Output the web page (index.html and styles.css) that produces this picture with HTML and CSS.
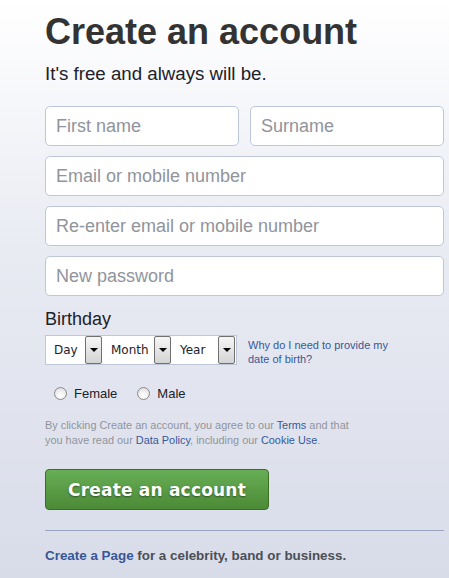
FILE: index.html
```html
<!DOCTYPE html>
<html>
<head>
<meta charset="utf-8">
<link rel="stylesheet" href="styles.css">
</head>
<body>
<div class="page">
  <h1 class="title">Create an account</h1>
  <p class="subtitle">It's free and always will be.</p>
  <div class="row two">
    <div class="field">First name</div>
    <div class="field">Surname</div>
  </div>
  <div class="row"><div class="field">Email or mobile number</div></div>
  <div class="row"><div class="field">Re-enter email or mobile number</div></div>
  <div class="row"><div class="field">New password</div></div>
  <div class="bday-label">Birthday</div>
  <div class="bday">
    <div class="selects">
      <div class="sel sel-day"><span class="sel-text">Day</span><span class="arrow"></span></div>
      <div class="sel sel-month"><span class="sel-text">Month</span><span class="arrow"></span></div>
      <div class="sel sel-year"><span class="sel-text">Year</span><span class="arrow"></span></div>
    </div>
    <span class="why">Why do I need to provide my date of birth?</span>
  </div>
  <div class="gender">
    <span class="radio-item"><span class="radio"></span>Female</span>
    <span class="radio-item"><span class="radio"></span>Male</span>
  </div>
  <div class="terms">
    <div class="terms-line">By clicking Create an account, you agree to our <span class="link">Terms</span> and that</div>
    <div class="terms-line">you have read our <span class="link">Data Policy</span>, including our <span class="link">Cookie Use</span>.</div>
  </div>
  <button class="submit">Create an account</button>
  <div class="divider"></div>
  <p class="footer"><span class="link">Create a Page</span> for a celebrity, band or business.</p>
</div>
</body>
</html>
```
FILE: styles.css
```css
html, body {
  margin: 0;
  padding: 0;
}
body {
  width: 449px;
  height: 578px;
  overflow: hidden;
  background: linear-gradient(#ffffff 0px, #e9ebf3 250px, #d8dce9 578px);
  font-family: "Liberation Sans", Arial, sans-serif;
}
.page {
  padding: 10px 5px 0 45px;
}
.title {
  margin: 0;
  font-size: 36px;
  font-weight: bold;
  color: #333333;
  line-height: 44px;
}
.subtitle {
  margin: 8px 0 0;
  font-size: 18.7px;
  line-height: 24px;
  color: #1d2129;
}
.row {
  display: flex;
  gap: 11px;
  margin-top: 10px;
}
.row.two {
  margin-top: 20px;
}
.field {
  flex: 1;
  height: 38px;
  border: 1px solid #bdc7d8;
  border-radius: 5px;
  background: #fff;
  box-sizing: content-box;
  padding: 0 10px;
  font-size: 18px;
  line-height: 38px;
  color: #90949c;
}
.bday-label {
  margin-top: 12px;
  font-size: 18px;
  line-height: 22px;
  color: #1d2129;
}
.bday {
  display: flex;
  align-items: flex-start;
  margin-top: 5px;
}
.selects {
  display: flex;
  border: 1px solid #bdc7d8;
  background: #fff;
}
.sel {
  display: flex;
  align-items: center;
  height: 28px;
  font-family: Tahoma, "DejaVu Sans", sans-serif;
  font-size: 12px;
  color: #1d2129;
}
.sel-text {
  flex: 1;
  padding-left: 8px;
}
.sel-day { width: 57px; }
.sel-month { width: 69px; }
.sel-year { width: 64px; }
.arrow {
  position: relative;
  width: 15px;
  height: 26px;
  margin-right: 1px;
  border: 1px solid #707070;
  border-radius: 2px;
  background: linear-gradient(#f6f6f6, #d4d4d4);
}
.arrow::after {
  content: "";
  position: absolute;
  left: 4px;
  top: 11px;
  border-left: 4px solid transparent;
  border-right: 4px solid transparent;
  border-top: 4px solid #000;
}
.why {
  margin: 3px 0 0 11px;
  width: 148px;
  font-size: 11px;
  line-height: 14px;
  color: #365899;
}
.gender {
  display: flex;
  gap: 20px;
  margin: 20px 0 0 9px;
  font-size: 13px;
  color: #1d2129;
}
.radio-item {
  display: flex;
  align-items: center;
  gap: 7px;
}
.radio {
  width: 11px;
  height: 11px;
  border: 1px solid #8a8a8a;
  border-radius: 50%;
  background: radial-gradient(circle at 50% 70%, #ffffff 10%, #dcdcdc 90%);
}
.terms {
  margin: 17px 0 0;
  font-size: 10.9px;
  line-height: 15px;
  color: #90949c;
}
.terms-line {
  white-space: nowrap;
}
.link {
  color: #365899;
}
.submit {
  display: block;
  margin-top: 21px;
  width: 224px;
  height: 41px;
  border: 1px solid #3b6e22;
  border-radius: 4px;
  background: linear-gradient(#67ae55, #4c8a36);
  color: #fff;
  font-family: "DejaVu Sans", sans-serif;
  font-size: 17px;
  font-weight: bold;
  letter-spacing: 0.2px;
  text-shadow: 0 1px 2px rgba(0,0,0,0.45);
  padding: 0;
}
.divider {
  margin-top: 20px;
  height: 1px;
  background: #9aa4bf;
}
.footer {
  margin: 17px 0 0;
  font-size: 13.4px;
  font-weight: bold;
  color: #4b4f56;
}
```
